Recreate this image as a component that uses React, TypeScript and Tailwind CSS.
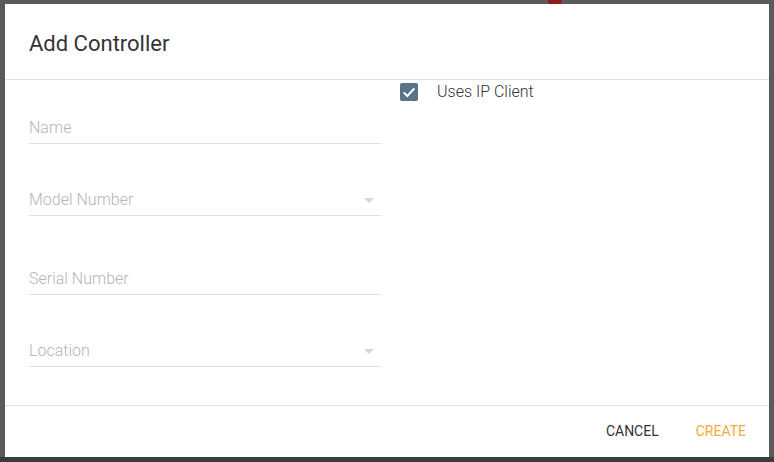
import React from 'react';

const font = { fontFamily: 'Roboto, "Liberation Sans", sans-serif' };

const TextField: React.FC<{ label: string; select?: boolean; className?: string }> = ({ label, select, className }) => (
  <div className={`flex items-center justify-between border-b border-[#e0e0e0] pb-[3px] ${className ?? ''}`}>
    <span className="text-[16px] leading-[24px] font-light text-[#b5b5b5]">{label}</span>
    {select && (
      <svg width="10" height="5" viewBox="0 0 10 5" className="mr-[7px]">
        <path d="M0 0 L10 0 L5 5 Z" fill="#d5d5d5" />
      </svg>
    )}
  </div>
);

const App: React.FC = () => {
  return (
    <div className="w-[774px] h-[462px] bg-[#5a5a5a] flex flex-col overflow-hidden" style={font}>
      {/* backdrop strip */}
      <div className="h-[4px] overflow-hidden">
        <div className="ml-[548px] mt-[-6px] w-[14px] h-[12px] rounded-full bg-[#8a1c1c]" />
      </div>

      <div className="flex">
        <div className="w-[5px]" />
        {/* Dialog */}
        <div className="w-[764px] h-[453px] bg-white flex flex-col">
          <div className="h-[76px] flex items-center px-[24px] border-b border-[#e0e0e0]">
            <h1 className="text-[22px] text-[#333333] mt-[3px]">Add Controller</h1>
          </div>

          <div className="flex flex-1">
            <div className="w-[376px] pl-[24px] pt-[36px] flex flex-col">
              <TextField label="Name" />
              <TextField label="Model Number" select className="mt-[44px]" />
              <TextField label="Serial Number" className="mt-[51px]" />
              <TextField label="Location" select className="mt-[44px]" />
            </div>
            <div className="pl-[19px] pt-0">
              <label className="flex items-center gap-[19px]">
                <span className="w-[18px] h-[18px] rounded-[2px] bg-[#5a7487] flex items-center justify-center">
                  <svg width="16" height="16" viewBox="0 0 24 24">
                    <path d="M4 12.5 L9.5 18 L20 6.5" fill="none" stroke="white" strokeWidth="3" />
                  </svg>
                </span>
                <span className="text-[16px] font-light text-[#333333]">Uses IP Client</span>
              </label>
            </div>
          </div>

          <div className="h-[52px] border-t border-[#e0e0e0] flex items-center justify-end pr-[23px] gap-[37px]">
            <button className="text-[14px] text-[#333333] uppercase">Cancel</button>
            <button className="text-[14px] text-[#f7a93c] uppercase">Create</button>
          </div>
        </div>
      </div>
      <div className="flex-1 bg-[#3b3b3b]" />
    </div>
  );
};

export default App;
